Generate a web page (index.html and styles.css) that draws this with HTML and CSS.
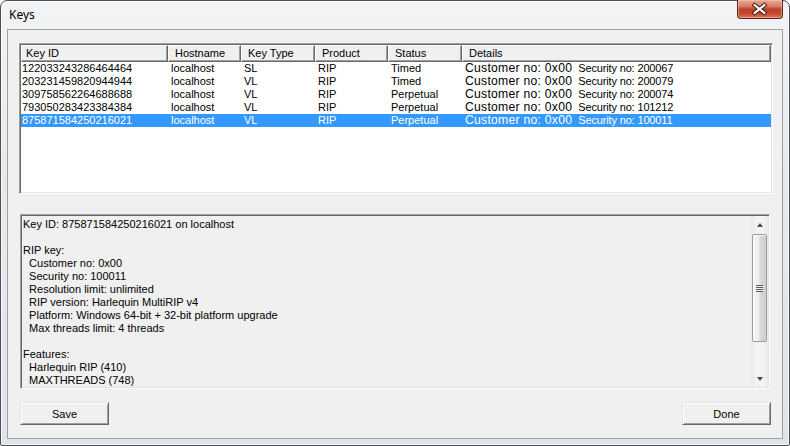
FILE: index.html
```html
<!DOCTYPE html>
<html lang="en">
<head>
    <meta charset="UTF-8">
    <title>Keys</title>
    <link rel="stylesheet" href="styles.css">
</head>
<body>
    <div class="window">
        <div class="titlebar">
            <span class="title">Keys</span>
            <button class="close" title="Close">
                <svg width="46" height="19" viewBox="0 0 46 19">
                    <path d="M18 5 L28 13 M28 5 L18 13" stroke="#3b1a14" stroke-width="4.2" stroke-linecap="square" fill="none"/>
                    <path d="M18 5 L28 13 M28 5 L18 13" stroke="#fff" stroke-width="2.2" stroke-linecap="square" fill="none"/>
                </svg>
            </button>
        </div>
        <div class="client">
            <div class="listview">
                <div class="lv-header">
                    <div class="hcell first">Key ID</div>
                    <div class="hcell">Hostname</div>
                    <div class="hcell">Key Type</div>
                    <div class="hcell">Product</div>
                    <div class="hcell">Status</div>
                    <div class="hcell">Details</div>
                </div>
                <div class="lv-row">
                    <div class="cell first">122033243286464464</div>
                    <div class="cell">localhost</div>
                    <div class="cell">SL</div>
                    <div class="cell">RIP</div>
                    <div class="cell">Timed</div>
                    <div class="cell"><span class="cust">Customer no: 0x00</span><span class="sec">Security no: 200067</span></div>
                </div>
                <div class="lv-row">
                    <div class="cell first">203231459820944944</div>
                    <div class="cell">localhost</div>
                    <div class="cell">VL</div>
                    <div class="cell">RIP</div>
                    <div class="cell">Timed</div>
                    <div class="cell"><span class="cust">Customer no: 0x00</span><span class="sec">Security no: 200079</span></div>
                </div>
                <div class="lv-row">
                    <div class="cell first">309758562264688688</div>
                    <div class="cell">localhost</div>
                    <div class="cell">VL</div>
                    <div class="cell">RIP</div>
                    <div class="cell">Perpetual</div>
                    <div class="cell"><span class="cust">Customer no: 0x00</span><span class="sec">Security no: 200074</span></div>
                </div>
                <div class="lv-row">
                    <div class="cell first">793050283423384384</div>
                    <div class="cell">localhost</div>
                    <div class="cell">VL</div>
                    <div class="cell">RIP</div>
                    <div class="cell">Perpetual</div>
                    <div class="cell"><span class="cust">Customer no: 0x00</span><span class="sec">Security no: 101212</span></div>
                </div>
                <div class="lv-row selected">
                    <div class="cell first">875871584250216021</div>
                    <div class="cell">localhost</div>
                    <div class="cell">VL</div>
                    <div class="cell">RIP</div>
                    <div class="cell">Perpetual</div>
                    <div class="cell"><span class="cust">Customer no: 0x00</span><span class="sec">Security no: 100011</span></div>
                </div>
            </div>

            <div class="details">
                <div class="details-text">Key ID: 875871584250216021 on localhost

RIP key:
  Customer no: 0x00
  Security no: 100011
  Resolution limit: unlimited
  RIP version: Harlequin MultiRIP v4
  Platform: Windows 64-bit + 32-bit platform upgrade
  Max threads limit: 4 threads

Features:
  Harlequin RIP (410)
  MAXTHREADS (748)</div>
                <div class="scrollbar">
                    <div class="sb-btn"><span class="arrow up"></span></div>
                    <div class="sb-track">
                        <div class="sb-thumb"><span class="grip"></span></div>
                    </div>
                    <div class="sb-btn"><span class="arrow down"></span></div>
                </div>
            </div>

            <div class="actions">
                <button class="btn save">Save</button>
                <button class="btn done">Done</button>
            </div>
        </div>
    </div>
</body>
</html>
```

FILE: styles.css
```css
body {
    margin: 0;
    width: 790px;
    height: 446px;
    overflow: hidden;
    background: #fff;
    font-family: "Liberation Sans", Arial, sans-serif;
}
.window {
    width: 790px;
    height: 446px;
    box-sizing: border-box;
    border: 1px solid #4b4f54;
    border-radius: 7px 7px 2px 2px;
    background: linear-gradient(to bottom, #f1f3f5 0%, #e6e9ec 40%, #e0e4e8 100%);
    box-shadow: inset 0 0 0 1px rgba(255, 255, 255, 0.75);
}
.titlebar {
    height: 28px;
    display: flex;
    align-items: flex-start;
}
.title {
    font-family: "Noto Sans", "Open Sans", sans-serif;
    font-size: 12px;
    line-height: 28px;
    padding-left: 8px;
    color: #000;
}
.close {
    margin: -1px 6px 0 auto;
    width: 46px;
    height: 19px;
    padding: 0;
    border: 1px solid #5b261c;
    border-top: none;
    border-radius: 0 0 4px 4px;
    background: linear-gradient(to bottom, #e8a999 0%, #d67d69 35%, #c0412b 50%, #c4472f 75%, #d97a5f 100%);
    box-shadow: inset 0 0 0 1px rgba(255, 210, 200, 0.45);
    box-sizing: border-box;
    display: flex;
    align-items: center;
    justify-content: center;
}
.close svg {
    display: block;
    margin-left: -1px;
}
.client {
    margin: 0 6px;
    height: 410px;
    box-sizing: border-box;
    border: 1px solid #9ba1a7;
    background: #f0f0f0;
    padding: 13px 9px 0 11px;
}

/* list view */
.listview {
    width: 754px;
    height: 151px;
    box-sizing: border-box;
    border: 1px solid;
    border-color: #a0a0a0 #ffffff #ffffff #a0a0a0;
    box-shadow: inset 1px 1px #696969, inset -1px -1px #e3e3e3;
    padding: 1px;
    background: #fff;
    font-size: 11px;
}
.lv-header,
.lv-row {
    display: grid;
    grid-template-columns: 147px 73px 74px 73px 74px 1fr;
}
.hcell {
    height: 17px;
    box-sizing: border-box;
    border-top: 1px solid #fff;
    border-left: 1px solid #fff;
    border-right: 1px solid #696969;
    border-bottom: 1px solid #696969;
    box-shadow: inset -1px -1px #a0a0a0;
    background: #f0f0f0;
    line-height: 15px;
    padding-left: 6px;
    white-space: nowrap;
    overflow: hidden;
}
.hcell.first {
    padding-left: 4px;
}
.lv-row {
    height: 13px;
    line-height: 13px;
    color: #000;
}
.cell {
    height: 13px;
    padding-left: 3px;
    white-space: nowrap;
    overflow: hidden;
}
.cell.first {
    padding-left: 1px;
}
.cust {
    display: inline-block;
    vertical-align: top;
    height: 13px;
    overflow: hidden;
    font-size: 12.2px;
    line-height: 13px;
    letter-spacing: 0.25px;
}
.sec {
    margin-left: 6px;
    font-size: 11px;
    letter-spacing: -0.15px;
}
.lv-row.selected {
    background: #3399ff;
    color: #fff;
}

/* details box */
.details {
    margin: 20px 0 0 1px;
    width: 750px;
    height: 175px;
    box-sizing: border-box;
    border: 1px solid;
    border-color: #a0a0a0 #ffffff #ffffff #a0a0a0;
    box-shadow: inset 1px 1px #696969, inset -1px -1px #e3e3e3;
    padding: 1px;
    background: #f0f0f0;
    display: flex;
}
.details-text {
    flex: 1;
    padding: 2px 0 0 1px;
    font-size: 11px;
    line-height: 13px;
    white-space: pre;
    overflow: hidden;
    color: #000;
}
.scrollbar {
    width: 17px;
    display: flex;
    flex-direction: column;
    background: linear-gradient(to right, #e9e9e9, #f3f3f3 30%, #f3f3f3 70%, #e9e9e9);
}
.sb-btn {
    height: 17px;
    display: flex;
    align-items: center;
    justify-content: center;
}
.arrow {
    width: 0;
    height: 0;
    border-left: 3.5px solid transparent;
    border-right: 3.5px solid transparent;
}
.arrow.up {
    border-bottom: 4px solid #4d4d4d;
}
.arrow.down {
    border-top: 4px solid #4d4d4d;
    margin-top: 1px;
}
.sb-track {
    flex: 1;
    padding-top: 1px;
}
.sb-thumb {
    height: 108px;
    margin: 0 1px;
    box-sizing: border-box;
    border: 1px solid #9c9c9c;
    border-radius: 2px;
    background: linear-gradient(to right, #f6f6f6, #ececec 45%, #d9d9d9 55%, #cfcfcf);
    box-shadow: inset 1px 1px rgba(255, 255, 255, 0.8);
    display: flex;
    align-items: center;
    justify-content: center;
}
.grip {
    width: 7px;
    height: 7px;
    background: repeating-linear-gradient(to bottom, #5a5a5a 0, #5a5a5a 1px, #f2f2f2 1px, #f2f2f2 2px);
}

/* buttons */
.actions {
    margin-top: 13px;
    display: flex;
    justify-content: space-between;
}
.btn {
    width: 89px;
    height: 23px;
    box-sizing: border-box;
    border: 1px solid;
    border-color: #e3e3e3 #696969 #696969 #e3e3e3;
    box-shadow: inset 1px 1px #ffffff, inset -1px -1px #a0a0a0;
    background: #f0f0f0;
    font-family: "Liberation Sans", Arial, sans-serif;
    font-size: 11px;
    color: #000;
    padding: 0;
    cursor: pointer;
}
.btn.save {
    margin-left: 1px;
}
.btn.done {
    margin-right: 2px;
}
```
